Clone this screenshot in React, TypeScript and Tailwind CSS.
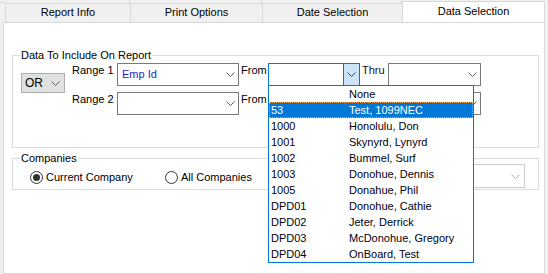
import React from "react";

function Chevron({ color = "#606060" }: { color?: string }) {
  return (
    <svg width="9" height="5" viewBox="0 0 9 5" className="block">
      <path d="M0.5 0.5 L4.5 4.5 L8.5 0.5" stroke={color} strokeWidth="1" fill="none" />
    </svg>
  );
}

function Combo({
  w,
  text,
  textClass = "text-black",
  focused = false,
}: {
  w: string;
  text?: string;
  textClass?: string;
  focused?: boolean;
}) {
  return (
    <div
      className={`${w} h-[23px] bg-white border flex items-stretch ${
        focused ? "border-[#0078d7]" : "border-[#7a7a7a]"
      }`}
    >
      <div className={`flex-1 flex items-center pl-[4px] ${textClass}`}>{text}</div>
      {focused ? (
        <div className="w-[16px] bg-[#cce4f7] border-l border-[#0078d7] flex items-center justify-center">
          <Chevron color="#404040" />
        </div>
      ) : (
        <div className="w-[16px] flex items-center justify-center">
          <Chevron />
        </div>
      )}
    </div>
  );
}

function Radio({ checked }: { checked?: boolean }) {
  return (
    <div className="w-[13px] h-[13px] rounded-full border border-[#333333] bg-white flex items-center justify-center">
      {checked && <div className="w-[7px] h-[7px] rounded-full bg-[#333333]" />}
    </div>
  );
}

const items: [string, string][] = [
  ["", "None"],
  ["53", "Test, 1099NEC"],
  ["1000", "Honolulu, Don"],
  ["1001", "Skynyrd, Lynyrd"],
  ["1002", "Bummel, Surf"],
  ["1003", "Donohue, Dennis"],
  ["1005", "Donahue, Phil"],
  ["DPD01", "Donohue, Cathie"],
  ["DPD02", "Jeter, Derrick"],
  ["DPD03", "McDonohue, Gregory"],
  ["DPD04", "OnBoard, Test"],
];

export default function App() {
  return (
    <div className="w-[548px] h-[274px] bg-[#f0f0f0] relative overflow-hidden text-[11px] leading-[13px] text-black font-['Liberation_Sans',Arial,sans-serif] flex flex-col">
      {/* tab strip */}
      <div className="flex h-[22px] shrink-0">
        <div className="w-[5px] flex flex-col">
          <div className="h-[3px] border-b border-[#d9d9d9]" />
        </div>
        {[
          ["Report Info", "w-[125px]"],
          ["Print Options", "w-[132px]"],
          ["Date Selection", "w-[140px]"],
        ].map(([label, w]) => (
          <div key={label} className={`${w} flex flex-col`}>
            <div className="h-[3px] border-r border-[#d9d9d9]" />
            <div className="flex-1 border-t border-l border-[#d9d9d9] bg-[#f0f0f0] flex items-center justify-center pb-[1px]">
              {label}
            </div>
          </div>
        ))}
        <div className="w-[143px] flex flex-col">
          <div className="h-[1px]" />
          <div className="relative z-10 h-[22px] bg-white border-t border-l border-r border-[#d9d9d9] flex items-start justify-center pt-[3px]">
            Data Selection
          </div>
        </div>
      </div>

      {/* panel */}
      <div className="ml-[3px] w-[542px] flex-1 bg-white border border-[#d9d9d9] pl-[8px] pt-[32px]">
        {/* group 1 */}
        <div className="relative w-[527px] h-[93px] border border-[#dcdcdc] pl-[8px] pt-[7px] flex">
          <span className="absolute -top-[7px] left-[7px] bg-white px-[1px]">Data To Include On Report</span>
          <div className="mt-[10px] w-[44px] h-[20px] bg-[#e1e1e1] border border-[#adadad] flex items-center pl-[3px]">
            <span className="flex-1 text-[12px]">OR</span>
            <div className="pr-[4px]">
              <Chevron />
            </div>
          </div>
          <div className="ml-[7px] flex flex-col gap-[6px]">
            {[1, 2].map((n) => (
              <div key={n} className="flex">
                <div className="w-[45px] pt-[1px]">Range {n}</div>
                <Combo w="w-[122px]" text={n === 1 ? "Emp Id" : ""} textClass="text-[#1c1ce0]" />
                <div className="w-[29px] pl-[2px] pt-[1px]">From</div>
                <Combo w="w-[92px]" focused={n === 1} />
                <div className={`w-[28px] pl-[2px] pt-[1px] text-[#1a0a2a] ${n === 2 ? "invisible" : ""}`}>Thru</div>
                <Combo w="w-[93px]" />
              </div>
            ))}
          </div>
        </div>

        {/* group 2 */}
        <div className="relative mt-[10px] w-[527px] h-[32px] border border-[#dcdcdc] flex items-start">
          <span className="absolute -top-[7px] left-[7px] bg-white px-[1px]">Companies</span>
          <div className="flex items-center pl-[17px] pt-[12px]">
            <Radio checked />
            <span className="ml-[3px] w-[119px]">Current Company</span>
            <Radio />
            <span className="ml-[3px]">All Companies</span>
          </div>
          <div className="ml-auto mr-[13px] mt-[5px] w-[110px] h-[24px] border border-[#cccccc] bg-white flex items-center justify-end pr-[4px]">
            <Chevron color="#b0b0b0" />
          </div>
        </div>
      </div>

      {/* dropdown list overlay */}
      <div className="absolute left-[268px] top-[85px] w-[206px] h-[178px] bg-white border border-[#0078d7] z-20 flex flex-col">
        {items.map(([code, name], i) => (
          <div
            key={i}
            className={`h-[16px] flex items-center ${
              i === 1
                ? "bg-[#0078d7] text-white outline-1 outline-dotted outline-[#f0a050] -outline-offset-1"
                : "text-[#000010]"
            }`}
          >
            <span className="w-[80px] pl-[2px]">{code}</span>
            <span>{name}</span>
          </div>
        ))}
      </div>
    </div>
  );
}
